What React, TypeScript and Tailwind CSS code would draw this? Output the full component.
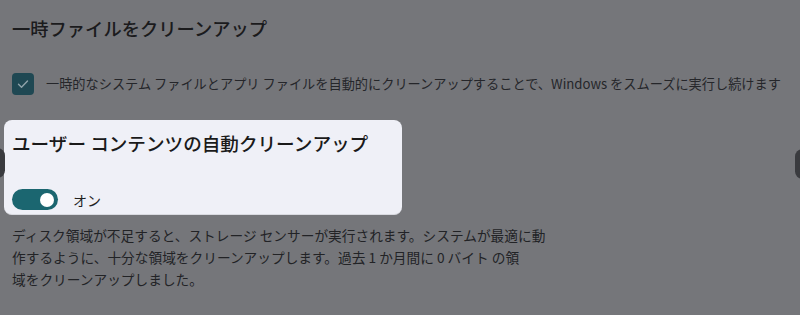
import React from 'react';

const font = { fontFamily: '"Noto Sans CJK JP", "Noto Sans", sans-serif' };

const App: React.FC = () => {
  return (
    <div
      className="relative w-[800px] h-[315px] overflow-hidden bg-[#75767a] text-[#1c1c1e]"
      style={font}
    >
      {/* dimmed edge handles */}
      <div className="absolute left-[-10px] top-[148px] w-[15px] h-[30px] rounded-full bg-[#3a3b3f]" />
      <div className="absolute right-[-10px] top-[149px] w-[15px] h-[30px] rounded-full bg-[#3a3b3f]" />

      <div className="flex flex-col pt-[15px]">
        <h2 className="pl-[12px] text-[18.3px] leading-[26px] font-medium text-[#1b1b1d]">
          一時ファイルをクリーンアップ
        </h2>

        <div className="flex items-center gap-[12px] pl-[12px] mt-[32px]">
          <div className="w-[22px] h-[22px] rounded-[4px] bg-[#1f4853] flex items-center justify-center">
            <svg width="14" height="14" viewBox="0 0 14 14" fill="none">
              <path d="M2.5 7.3l3 3 6-6.3" stroke="#8fa3aa" strokeWidth="1.4" strokeLinecap="round" strokeLinejoin="round" />
            </svg>
          </div>
          <p className="text-[13.2px] leading-[22px] text-[#25262a] whitespace-nowrap">
            一時的なシステム ファイルとアプリ ファイルを自動的にクリーンアップすることで、Windows をスムーズに実行し続けます
          </p>
        </div>

        <div className="ml-[4px] mt-[25px] w-[398px] h-[95px] rounded-[8px] bg-[#eff0f7] border-b border-[#d9dae0] flex flex-col">
          <h3 className="pl-[8px] pt-[10px] text-[18.6px] leading-[26px] font-medium text-[#1a1a1a]">
            ユーザー コンテンツの自動クリーンアップ
          </h3>
          <div className="flex items-center pl-[8px] mt-[33px] gap-[15px]">
            <div className="w-[46px] h-[21px] rounded-full bg-[#1b6670] flex items-center justify-end pr-[4px]">
              <div className="w-[14px] h-[14px] rounded-full bg-white" />
            </div>
            <span className="text-[14px] leading-[20px] text-[#222]">オン</span>
          </div>
        </div>

        <p className="pl-[12px] mt-[9px] text-[13.7px] leading-[22px] text-[#222326]">
          ディスク領域が不足すると、ストレージ センサーが実行されます。システムが最適に動
          <br />
          作するように、十分な領域をクリーンアップします。過去 1 か月間に 0 バイト の領
          <br />
          域をクリーンアップしました。
        </p>
      </div>
    </div>
  );
};

export default App;
